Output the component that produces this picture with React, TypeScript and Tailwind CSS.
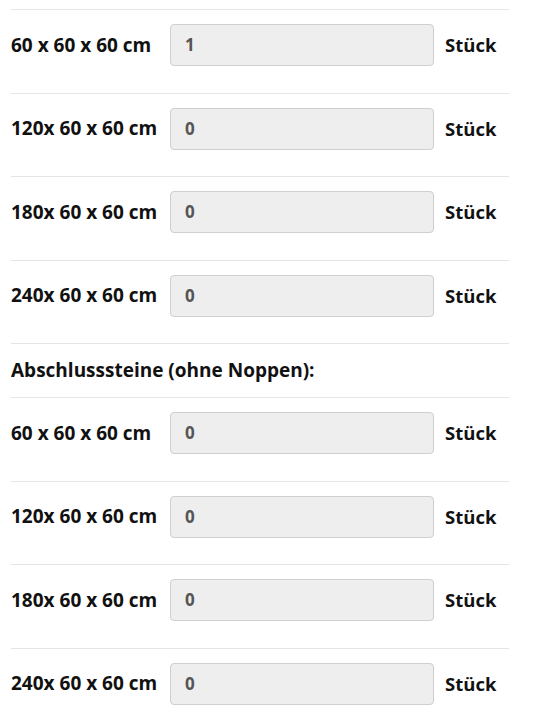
import React from "react";

const Row = ({ label, value }: { label: string; value: string }) => (
  <div className="flex items-center border-t border-[#e5e5e5] pt-[14px] pb-[26.5px]">
    <div className="w-[159px] shrink-0 text-[19px] font-bold text-[#111]">{label}</div>
    <div className="w-[264px] h-[42px] shrink-0 rounded-[4px] border border-[#cfcfcf] bg-[#eeeeee] flex items-center pl-[14px] text-[17px] font-bold text-[#555]">
      {value}
    </div>
    <div className="ml-[11px] text-[18.5px] font-bold text-[#111]">Stück</div>
  </div>
);

export default function App() {
  const sizes = ["60 x 60 x 60 cm", "120x 60 x 60 cm", "180x 60 x 60 cm", "240x 60 x 60 cm"];
  return (
    <div className="w-[540px] h-[722px] overflow-hidden bg-white" style={{ fontFamily: '"Open Sans", sans-serif' }}>
      <div className="ml-[11px] w-[498px] pt-[9px]">
        {sizes.map((s, i) => (
          <Row key={"a" + i} label={s} value={i === 0 ? "1" : "0"} />
        ))}
        <div className="border-t border-[#e5e5e5] py-[15px] text-[19px] leading-[23px] font-bold text-[#111]">
          Abschlusssteine (ohne Noppen):
        </div>
        {sizes.map((s, i) => (
          <Row key={"b" + i} label={s} value="0" />
        ))}
      </div>
    </div>
  );
}
